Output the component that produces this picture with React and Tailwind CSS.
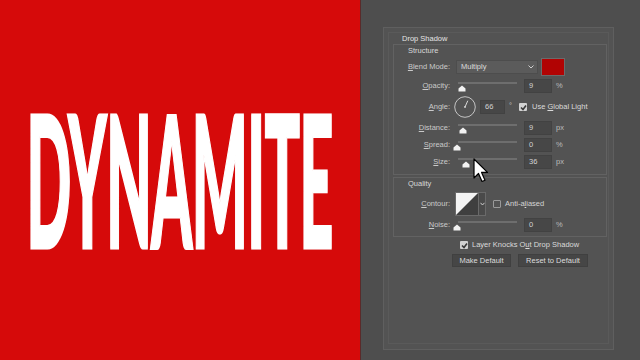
import React from 'react';

const Thumb = ({ left }) => (
  <svg className="absolute top-[6px]" style={{ left }} width="8" height="7" viewBox="0 0 8 7">
    <path d="M4 0.5 L7.5 3.5 L7.5 6.5 L0.5 6.5 L0.5 3.5 Z" fill="#f2f2f2" />
  </svg>
);

const Slider = ({ thumb }) => (
  <div className="relative w-[62px] h-[14px]">
    <div className="absolute left-[2px] right-[1px] top-[3px] h-[2px] bg-[#6e6e6e]" />
    <Thumb left={thumb} />
  </div>
);

const Field = ({ value, w = 'w-[28px]' }) => (
  <div className={`${w} h-[14px] bg-[#474747] border border-[#424242] pl-[4px] text-[#d4d4d4] leading-[12px]`}>
    {value}
  </div>
);

const Label = ({ first, rest }) => (
  <div className="w-[56px] text-right text-[#cacaca] shrink-0">
    <span className="underline underline-offset-1">{first}</span>
    {rest}
  </div>
);

const SliderRow = ({ first, rest, thumb, value, unit, mt = 'mt-[3px]' }) => (
  <div className={`flex items-center h-[14px] ${mt}`}>
    <Label first={first} rest={rest} />
    <div className="ml-[6px]">
      <Slider thumb={thumb} />
    </div>
    <div className="ml-[6px]">
      <Field value={value} />
    </div>
    <div className="ml-[4px] text-[#bcbcbc]">{unit}</div>
  </div>
);

const Check = ({ checked }) =>
  checked ? (
    <div className="w-[8px] h-[8px] bg-[#d2d2d2] rounded-[1px] flex items-center justify-center">
      <svg width="7" height="7" viewBox="0 0 7 7">
        <path d="M1 3.5 L3 5.5 L6 1.5" stroke="#3a3a3a" strokeWidth="1.6" fill="none" />
      </svg>
    </div>
  ) : (
    <div className="w-[8px] h-[8px] border border-[#9a9a9a] rounded-[1px]" />
  );

export default function App() {
  return (
    <div className="relative w-[640px] h-[360px] flex overflow-hidden font-['Liberation_Sans',Arial,sans-serif] text-[7.5px]">
      {/* left artwork */}
      <div className="w-[360px] h-[360px] bg-[#d60a0a] flex items-center justify-center pb-[6px] overflow-hidden">
        <span className="shrink-0 text-white font-['Lato','Liberation_Sans',sans-serif] font-black text-[184px] leading-none tracking-[-0.01em] [transform:scaleX(0.32)] [-webkit-text-stroke:3px_white] whitespace-nowrap">
          DYNAMITE
        </span>
      </div>

      {/* layer style dialog */}
      <div className="flex-1 bg-[#4e4e4e] border-l border-[#5a2a2a] pl-[22px] pt-[27px]">
        <div className="w-[231px] h-[323px] border border-[#5f5f5f] bg-[#535353] pl-[4px] pt-[4px] pr-[4px] pb-[5px]">
          <div className="h-full border border-[#5a5a5a] pl-[4px] pr-[2px]">
            <div className="h-[11px] leading-[11px] pl-[9px] text-[#e4e4e4]">Drop Shadow</div>

            {/* Structure */}
            <div className="w-[214px] border border-[#626262] pb-[5px]">
              <div className="h-[11px] leading-[11px] pl-[14px] text-[#d8d8d8]">Structure</div>

              <div className="flex items-center h-[18px] mt-[2px]">
                <Label first="B" rest="lend Mode:" />
                <div className="ml-[6px] w-[82px] h-[14px] bg-[#5b5b5b] border border-[#4d4d4d] flex items-center justify-between pl-[4px] pr-[3px] text-[#dcdcdc]">
                  <span>Multiply</span>
                  <svg width="6" height="4" viewBox="0 0 6 4">
                    <path d="M0.5 0.5 L3 3 L5.5 0.5" stroke="#cfcfcf" strokeWidth="1" fill="none" />
                  </svg>
                </div>
                <div className="ml-[3px] w-[24px] h-[18px] bg-[#b10303] border border-[#6a6a6a]" />
              </div>

              <SliderRow first="O" rest="pacity:" thumb={2} value="9" unit="%" />

              <div className="flex items-center h-[22px] mt-[3px]">
                <Label first="A" rest="ngle:" />
                <svg className="ml-[4px]" width="22" height="22" viewBox="0 0 22 22">
                  <circle cx="11" cy="11" r="10.3" stroke="#c4c4c4" strokeWidth="1" fill="none" />
                  <path d="M11 11 L13.8 4.7" stroke="#d8d8d8" strokeWidth="1" />
                  <circle cx="11" cy="11" r="0.9" fill="#d8d8d8" />
                </svg>
                <div className="ml-[4px]">
                  <Field value="66" w="w-[25px]" />
                </div>
                <div className="ml-[4px] text-[#c4c4c4] self-start mt-[4px]">°</div>
                <div className="ml-[7px]">
                  <Check checked />
                </div>
                <div className="ml-[5px] text-[#dadada]">
                  Use <span className="underline underline-offset-1">G</span>lobal Light
                </div>
              </div>

              <SliderRow first="D" rest="istance:" thumb={3} value="9" unit="px" />
              <SliderRow first="S" rest="pread:" thumb={-3} value="0" unit="%" />
              <SliderRow first="S" rest="ize:" thumb={6} value="36" unit="px" />
            </div>

            {/* Quality */}
            <div className="w-[214px] border border-[#626262] mt-[2px] pb-[4px]">
              <div className="h-[11px] leading-[11px] pl-[14px] text-[#d8d8d8]">Quality</div>

              <div className="flex items-center h-[24px] mt-[3px]">
                <Label first="C" rest="ontour:" />
                <div className="ml-[5px] flex h-[24px] border border-[#6a6a6a]">
                  <svg width="22" height="22" viewBox="0 0 22 22">
                    <rect width="22" height="22" fill="#3f3f3f" />
                    <path d="M0 0 L22 0 L0 22 Z" fill="#f4f4f4" />
                  </svg>
                  <div className="w-[7px] bg-[#4a4a4a] border-l border-[#6a6a6a] flex items-center justify-center">
                    <svg width="5" height="4" viewBox="0 0 5 4">
                      <path d="M0.5 0.8 L2.5 3 L4.5 0.8" stroke="#cfcfcf" strokeWidth="1" fill="none" />
                    </svg>
                  </div>
                </div>
                <div className="ml-[7px]">
                  <Check />
                </div>
                <div className="ml-[4px] text-[#d4d4d4]">
                  Anti-a<span className="underline underline-offset-1">l</span>iased
                </div>
              </div>

              <SliderRow first="N" rest="oise:" thumb={-3} value="0" unit="%" mt="mt-[2px]" />
            </div>

            <div className="flex items-center h-[10px] mt-[3px] pl-[67px]">
              <Check checked />
              <div className="ml-[4px] text-[#dadada]">
                Layer Knocks O<span className="underline underline-offset-1">u</span>t Drop Shadow
              </div>
            </div>

            <div className="flex mt-[4px] pl-[59px] gap-[7px]">
              <div className="w-[59px] h-[13px] bg-[#464646] border border-[#404040] text-center leading-[11px] text-[#dcdcdc]">
                Make Default
              </div>
              <div className="w-[70px] h-[13px] bg-[#464646] border border-[#404040] text-center leading-[11px] text-[#dcdcdc]">
                Reset to Default
              </div>
            </div>
          </div>
        </div>
      </div>

      {/* mouse pointer */}
      <svg className="absolute left-[473px] top-[158px]" width="16" height="26" viewBox="0 0 16 26">
        <path
          d="M1 1 L1 20 L5.5 15.5 L9 23.5 L12 22.2 L8.6 14.4 L14.5 14.4 Z"
          fill="#ffffff"
          stroke="#000000"
          strokeWidth="1.2"
          strokeLinejoin="round"
        />
      </svg>
    </div>
  );
}
